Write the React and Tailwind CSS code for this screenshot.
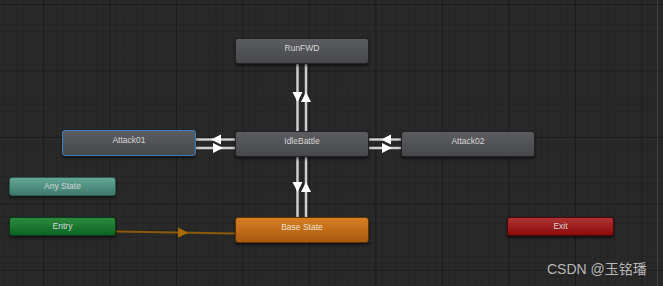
const grid =
  "bg-[#292929] bg-[linear-gradient(to_right,#1c1c1c_1px,transparent_1px),linear-gradient(to_bottom,#1c1c1c_1px,transparent_1px),linear-gradient(to_right,#242424_1px,transparent_1px),linear-gradient(to_bottom,#242424_1px,transparent_1px)] bg-[size:66.5px_66.5px,66.5px_66.5px,6.65px_6.65px,6.65px_6.65px] bg-[position:43px_4px,43px_4px,43px_4px,43px_4px]";

const label = "font-['Liberation_Sans',Arial,sans-serif] text-[8.5px] text-[#d6d6d6]";

function StateNode({ name, className }) {
  return (
    <div
      className={`absolute w-[134px] h-[26px] rounded-[3px] border border-[#232323] bg-[linear-gradient(to_bottom,#5b5d61,#46484b)] shadow-[0_2px_3px_rgba(0,0,0,0.55)] flex justify-center pt-[3px] leading-[12px] ${label} ${className}`}
    >
      {name}
    </div>
  );
}

function SmallNode({ name, className }) {
  return (
    <div
      className={`absolute w-[107px] h-[19px] rounded-[3px] shadow-[0_2px_3px_rgba(0,0,0,0.55)] flex items-center justify-center ${label} ${className}`}
    >
      {name}
    </div>
  );
}

function Transitions() {
  const line = "#cdcdcd";
  return (
    <svg className="absolute inset-0" width="663" height="286">
      {/* RunFWD <-> IdleBattle */}
      <line x1="297.5" y1="64" x2="297.5" y2="131" stroke={line} strokeWidth="2.5" />
      <line x1="306" y1="64" x2="306" y2="131" stroke={line} strokeWidth="2.5" />
      <polygon points="292.5,92 302.5,92 297.5,102" fill="#fff" />
      <polygon points="301,102 311,102 306,92" fill="#fff" />
      {/* IdleBattle <-> Base State */}
      <line x1="297.5" y1="157" x2="297.5" y2="217" stroke={line} strokeWidth="2.5" />
      <line x1="306" y1="157" x2="306" y2="217" stroke={line} strokeWidth="2.5" />
      <polygon points="292.5,182 302.5,182 297.5,192" fill="#fff" />
      <polygon points="301,192 311,192 306,182" fill="#fff" />
      {/* Attack01 <-> IdleBattle */}
      <line x1="196" y1="139.5" x2="235" y2="139.5" stroke={line} strokeWidth="2.5" />
      <line x1="196" y1="148" x2="235" y2="148" stroke={line} strokeWidth="2.5" />
      <polygon points="211,139.5 221,134.5 221,144.5" fill="#fff" />
      <polygon points="223,148 213,143 213,153" fill="#fff" />
      {/* Attack02 <-> IdleBattle */}
      <line x1="369" y1="139.5" x2="401" y2="139.5" stroke={line} strokeWidth="2.5" />
      <line x1="369" y1="148" x2="401" y2="148" stroke={line} strokeWidth="2.5" />
      <polygon points="381,139.5 391,134.5 391,144.5" fill="#fff" />
      <polygon points="392,148 382,143 382,153" fill="#fff" />
      {/* Entry -> Base State */}
      <line x1="116" y1="231.5" x2="235" y2="233.5" stroke="#8a5a08" strokeWidth="2" />
      <polygon points="188,232.8 178,227.6 178,237.8" fill="#a86c06" />
    </svg>
  );
}

export default function App() {
  return (
    <div className={`relative w-[663px] h-[286px] overflow-hidden ${grid}`}>
      <Transitions />

      <StateNode name="RunFWD" className="left-[235px] top-[38px]" />
      <StateNode name="IdleBattle" className="left-[235px] top-[131px]" />
      <StateNode
        name="Attack01"
        className="left-[62px] top-[130px] !border-[#3a7fc4] shadow-[0_0_4px_1px_rgba(40,110,190,0.7)]"
      />
      <StateNode name="Attack02" className="left-[401px] top-[131px]" />
      <StateNode
        name="Base State"
        className="left-[235px] top-[217px] !border-[#5a3408] !bg-[linear-gradient(to_bottom,#d67e22,#a95a10)] text-[#f0e0d0]"
      />

      <SmallNode
        name="Any State"
        className="left-[9px] top-[177px] border border-[#2f5a50] bg-[linear-gradient(to_bottom,#62a797,#3e7a6c)]"
      />
      <SmallNode
        name="Entry"
        className="left-[9px] top-[217px] border border-[#0c3a16] bg-[linear-gradient(to_bottom,#2c8a3e,#0a6522)]"
      />
      <SmallNode
        name="Exit"
        className="left-[507px] top-[217px] border border-[#4a0808] bg-[linear-gradient(to_bottom,#ad3434,#8c0a0a)]"
      />

      <div className="absolute right-[5px] top-0 h-full w-px bg-[#3c3c3c]" />

      <div className="absolute left-[547px] top-[260px] text-[14px] leading-[18px] text-[#b8b8b8] font-['Liberation_Sans','Noto_Sans_CJK_SC',sans-serif]">
        CSDN @玉铭璠
      </div>
    </div>
  );
}
